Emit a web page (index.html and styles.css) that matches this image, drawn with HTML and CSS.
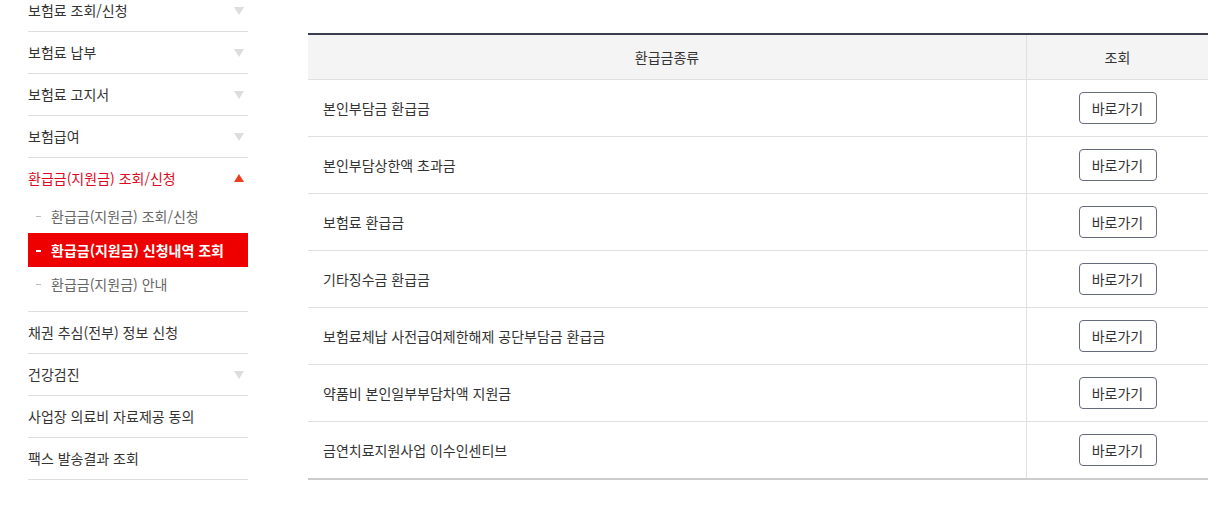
FILE: index.html
```html
<!DOCTYPE html>
<html lang="ko">
<head>
  <meta charset="UTF-8" />
  <meta name="viewport" content="width=device-width, initial-scale=1.0" />
  <title>환급금(지원금) 신청내역 조회</title>
  <link rel="stylesheet" href="styles.css">
</head>
<body>
  <div class="wrap">
    <aside class="lnb">
      <ul class="lnb-list">
        <li class="has-sub"><a href="#">보험료 조회/신청</a></li>
        <li class="has-sub"><a href="#">보험료 납부</a></li>
        <li class="has-sub"><a href="#">보험료 고지서</a></li>
        <li class="has-sub"><a href="#">보험급여</a></li>
        <li class="has-sub open">
          <a href="#">환급금(지원금) 조회/신청</a>
          <ul class="sub-list">
            <li><a href="#">환급금(지원금) 조회/신청</a></li>
            <li class="on"><a href="#">환급금(지원금) 신청내역 조회</a></li>
            <li><a href="#">환급금(지원금) 안내</a></li>
          </ul>
        </li>
        <li><a href="#">채권 추심(전부) 정보 신청</a></li>
        <li class="has-sub"><a href="#">건강검진</a></li>
        <li><a href="#">사업장 의료비 자료제공 동의</a></li>
        <li><a href="#">팩스 발송결과 조회</a></li>
      </ul>
    </aside>

    <main class="content">
      <table class="tbl">
        <thead>
          <tr>
            <th>환급금종류</th>
            <th class="col-btn">조회</th>
          </tr>
        </thead>
        <tbody>
          <tr><td>본인부담금 환급금</td><td class="col-btn"><button>바로가기</button></td></tr>
          <tr><td>본인부담상한액 초과금</td><td class="col-btn"><button>바로가기</button></td></tr>
          <tr><td>보험료 환급금</td><td class="col-btn"><button>바로가기</button></td></tr>
          <tr><td>기타징수금 환급금</td><td class="col-btn"><button>바로가기</button></td></tr>
          <tr><td>보험료체납 사전급여제한해제 공단부담금 환급금</td><td class="col-btn"><button>바로가기</button></td></tr>
          <tr><td>약품비 본인일부부담차액 지원금</td><td class="col-btn"><button>바로가기</button></td></tr>
          <tr><td>금연치료지원사업 이수인센티브</td><td class="col-btn"><button>바로가기</button></td></tr>
        </tbody>
      </table>
    </main>
  </div>
</body>
</html>
```

FILE: styles.css
```css
body {
  margin: 0;
  font-family: "Noto Sans CJK KR", "Noto Sans", sans-serif;
  font-size: 14px;
  color: #333;
  background-color: #fff;
  overflow: hidden;
}

a {
  color: inherit;
  text-decoration: none;
}

ul {
  list-style: none;
  margin: 0;
  padding: 0;
}

.wrap {
  display: flex;
  gap: 60px;
  padding-left: 28px;
  padding-right: 10px;
}

/* left menu */
.lnb {
  width: 220px;
  flex-shrink: 0;
  margin-top: -10px;
}

.lnb-list > li {
  border-bottom: 1px solid #ddd;
}

.lnb-list > li > a {
  position: relative;
  display: block;
  height: 41px;
  line-height: 41px;
  font-size: 14px;
  color: #333;
}

.lnb-list > li.has-sub > a::after {
  content: "";
  position: absolute;
  right: 4px;
  top: 17px;
  border-left: 5px solid transparent;
  border-right: 5px solid transparent;
  border-top: 8px solid #ddd;
}

.lnb-list > li.open > a {
  color: #dc0a1e;
}

.lnb-list > li.open > a::after {
  top: 16px;
  border-top: none;
  border-bottom: 8px solid #f03c1e;
}

.sub-list {
  padding-bottom: 10px;
}

.sub-list li a {
  display: block;
  height: 34px;
  line-height: 34px;
  padding-left: 23px;
  position: relative;
  color: #666;
  font-size: 14px;
}

.sub-list li a::before {
  content: "";
  position: absolute;
  left: 8px;
  top: 17px;
  width: 5px;
  height: 1px;
  background-color: #bbb;
}

.sub-list li.on a {
  background-color: #ee0000;
  color: #fff;
  font-weight: bold;
}

.sub-list li.on a::before {
  background-color: #fff;
  height: 2px;
}

/* table */
.content {
  flex: 1;
  padding-top: 33px;
}

.tbl {
  width: 900px;
  border-collapse: collapse;
  border-top: 2px solid #3d3d52;
  border-bottom: 2px solid #ccc;
}

.tbl th {
  height: 44px;
  background-color: #f4f4f4;
  font-weight: normal;
  font-size: 14px;
  color: #333;
  border-bottom: 1px solid #e0e0e0;
  padding: 0;
}

.tbl td {
  height: 56px;
  padding: 0 0 0 15px;
  border-bottom: 1px solid #e0e0e0;
  font-size: 14px;
  color: #333;
}

.tbl tbody tr:last-child td {
  border-bottom: none;
}

.tbl .col-btn {
  width: 181px;
  text-align: center;
  border-left: 1px solid #e0e0e0;
  padding: 0;
}

.tbl button {
  width: 78px;
  height: 32px;
  border: 1px solid #666b7a;
  border-radius: 4px;
  background-color: #fff;
  font-family: inherit;
  font-size: 14px;
  color: #333;
  cursor: pointer;
  padding: 0;
}
```
